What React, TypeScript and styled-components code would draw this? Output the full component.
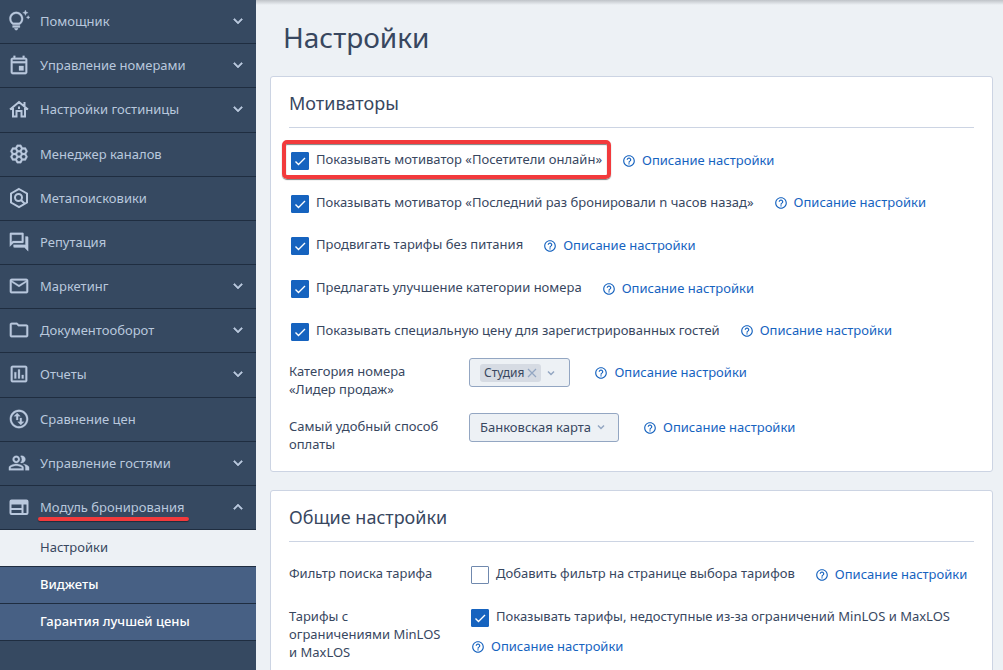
import React, { useState } from "react";
import styled, { createGlobalStyle, css } from "styled-components";
import type { IconType } from "react-icons";
import {
  MdOutlineTipsAndUpdates,
  MdOutlineEvent,
  MdOutlineHive,
  MdOutlineForum,
  MdMailOutline,
  MdOutlineFolder,
  MdOutlineInsertChart,
  MdOutlineSwapVerticalCircle,
  MdOutlinePeopleAlt,
  MdExpandMore,
  MdExpandLess,
  MdHelpOutline,
} from "react-icons/md";

const color = {
  nav: "#364961",
  navLine: "#1f2d40",
  navText: "#b9c8dd",
  subNav: "#476084",
  page: "#edf1f5",
  line: "#ccd4e3",
  text: "#38475f",
  link: "#1663bf",
  control: "#93a6c2",
  mark: "#f23a3c",
};

const GlobalStyle = createGlobalStyle`
  * { box-sizing: border-box; }
  body {
    margin: 0;
    background: ${color.page};
    color: ${color.text};
    font: 13px/18px "Noto Sans", "Open Sans", sans-serif;
  }
  ul { list-style: none; margin: 0; padding: 0; }
  button, select, input { font: inherit; color: inherit; margin: 0; }
`;

const Shell = styled.div`
  display: grid;
  grid-template-columns: 256px minmax(0, 1fr);
  height: 100vh;
`;

const Sidebar = styled.nav`
  background: ${color.nav};
  overflow: hidden;
`;

const Menu = styled.ul`
  display: grid;
  grid-auto-rows: 1fr;
  min-height: 530px;
`;

const MenuItem = styled.li`
  display: flex;
  border-bottom: 1px solid ${color.navLine};
`;

const MenuButton = styled.button`
  flex: 1;
  display: grid;
  grid-template-columns: 22px 1fr 18px;
  column-gap: 10px;
  align-items: center;
  padding: 0 9px 1px 8px;
  border: 0;
  background: none;
  color: ${color.navText};
  text-align: left;
  cursor: pointer;

  > svg:last-child path:not([fill="none"]) {
    stroke-width: 0.8px;
  }
`;

const MenuLabel = styled.span<{ $marked?: boolean }>`
  position: relative;
  justify-self: start;
  ${(p) =>
    p.$marked &&
    css`
      &::after {
        content: "";
        position: absolute;
        left: -2px;
        right: -4px;
        bottom: -5px;
        height: 4px;
        border-radius: 2px;
        background: ${color.mark};
        box-shadow: 0 1px 1px rgba(0, 0, 0, 0.4);
      }
    `}
`;

const MenuIcon = styled.span`
  display: grid;

  svg[stroke-width="0"] path:not([fill="none"]) {
    stroke-width: 0.3px;
  }
`;

const SubLink = styled.a<{ $active?: boolean }>`
  display: block;
  padding: 8px 40px 10px;
  border-bottom: 1px solid ${color.navLine};
  background: ${(p) => (p.$active ? color.page : color.subNav)};
  color: ${(p) => (p.$active ? color.text : "#fff")};
  font-weight: ${(p) => (p.$active ? 400 : 500)};
  text-decoration: none;
`;

const Main = styled.main`
  overflow-y: auto;
  scrollbar-width: none;
  padding: 0 10px 20px 14px;
  background: linear-gradient(#bfc3c8, ${color.page} 5px);
`;

const Title = styled.h1`
  margin: 0;
  padding: 18px 13px 20px;
  font-size: 28px;
  line-height: 38px;
  font-weight: 400;
`;

const Card = styled.section`
  margin-bottom: 18px;
  padding: 0 18px 18px;
  border: 1px solid ${color.line};
  border-radius: 3px;
  background: #fff;
`;

const CardTitle = styled.h2`
  margin: 0;
  padding: 14px 0 12px;
  border-bottom: 1px solid ${color.line};
  font-size: 18px;
  line-height: 24px;
  font-weight: 400;
`;

const OptionList = styled.div`
  display: grid;
  grid-auto-rows: 1fr;
  min-height: 224px;
  padding: 11px 0 0 2px;
`;

const OptionRow = styled.div`
  display: flex;
  align-items: center;
  gap: 20px;
`;

const CheckLabel = styled.label<{ $marked?: boolean }>`
  position: relative;
  display: flex;
  align-items: flex-start;
  gap: 7px;
  ${(p) =>
    p.$marked &&
    css`
      &::after {
        content: "";
        position: absolute;
        inset: -10px -9px -9px;
        border: 4px solid ${color.mark};
        border-radius: 5px;
        box-shadow: 0 1px 1px rgba(0, 0, 0, 0.5), inset 0 1px 1px rgba(0, 0, 0, 0.5);
        pointer-events: none;
      }
    `}
`;

const CheckBox = styled.span`
  position: relative;
  display: grid;
  margin-top: 2px;

  input {
    appearance: none;
    width: 18px;
    height: 18px;
    border: 1px solid #7089ae;
    border-radius: 1px;
    background: #fff;
  }
  input:checked {
    border-color: ${color.link};
    background: ${color.link};
  }
  svg {
    position: absolute;
    inset: 0;
    pointer-events: none;
  }
`;

const HelpAnchor = styled.a`
  display: inline-flex;
  align-items: center;
  gap: 6px;
  padding-bottom: 1px;
  color: ${color.link};
  text-decoration: none;
  white-space: nowrap;

  svg {
    margin-top: 2px;
  }
`;

const FieldList = styled.div<{ $wide?: boolean }>`
  display: grid;
  row-gap: ${(p) => (p.$wide ? 23 : 15)}px;
  padding-top: ${(p) => (p.$wide ? 22 : 6)}px;
`;

const Field = styled.div`
  display: grid;
  grid-template-columns: 156px minmax(0, 1fr);
  column-gap: 24px;
  align-items: start;
`;

const FieldLabel = styled.label<{ $beside?: boolean }>`
  padding-top: ${(p) => (p.$beside ? 4 : 0)}px;
`;

const FieldBody = styled.div<{ $indent?: boolean }>`
  display: flex;
  flex-wrap: wrap;
  align-items: center;
  gap: 10px ${(p) => (p.$indent ? 20 : 24)}px;
  padding-left: ${(p) => (p.$indent ? 2 : 0)}px;
`;

const controlBox = css`
  height: 29px;
  border: 1px solid ${color.control};
  border-radius: 3px;
  background: ${color.page};
`;

const ChipBox = styled.div`
  ${controlBox}
  display: flex;
  align-items: center;
  gap: 3px;
  padding: 0 11px 0 10px;
`;

const Chip = styled.span`
  display: flex;
  align-items: center;
  gap: 3px;
  height: 18px;
  padding: 0 4px;
  border-radius: 3px;
  background: #d6dbe3;
  font-size: 12px;
`;

const IconButton = styled.button`
  display: grid;
  padding: 0;
  border: 0;
  background: none;
  color: ${color.control};
  cursor: pointer;
`;

const SelectWrap = styled.div`
  position: relative;
  display: flex;
  color: ${color.control};

  select {
    ${controlBox}
    appearance: none;
    padding: 0 27px 2px 10px;
    color: ${color.text};
  }
  svg {
    position: absolute;
    right: 11px;
    top: 7px;
    pointer-events: none;
  }
`;

const HomeIcon = () => (
  <svg width="22" height="22" viewBox="0 0 22 22" fill="none" stroke="currentColor" strokeWidth="2">
    <path d="M2 11.500 11 4l9 7.500M16.500 8.500V4M5 10v8.500h3.500V13h5v5.500H17V10" />
    <path d="M11 8.500v2.500" />
  </svg>
);

const HexSearchIcon = () => (
  <svg width="22" height="22" viewBox="0 0 22 22" fill="none" stroke="currentColor" strokeWidth="2">
    <path d="M11 2 19 6.500v9L11 20l-8-4.500v-9z" />
    <circle cx="10.500" cy="10.500" r="3.500" />
    <path d="m13 13 3.500 3.500" />
  </svg>
);

const LayoutIcon = () => (
  <svg width="22" height="22" viewBox="0 0 22 22" fill="none" stroke="currentColor" strokeWidth="2">
    <rect x="2.500" y="4.500" width="17" height="13.500" rx="1" />
    <path d="M2.500 6.500h17" strokeWidth="4" />
    <path d="M3 13h11M14.500 8v10" />
  </svg>
);

const ChevronIcon = () => (
  <svg width="14" height="14" viewBox="0 0 14 14" fill="none" stroke="currentColor" strokeWidth="1.500">
    <path d="m4 5.500 3 3 3-3" />
  </svg>
);

const CrossIcon = () => (
  <svg width="10" height="10" viewBox="0 0 10 10" fill="none" stroke="currentColor" strokeWidth="1.200">
    <path d="m1 1 8 8M9 1 1 9" />
  </svg>
);

const TickIcon = () => (
  <svg width="18" height="18" viewBox="0 0 18 18" fill="none" stroke="#fff" strokeWidth="1.400">
    <path d="m4.500 9.500 3 3 6.500-6.500" />
  </svg>
);

type Icon = IconType | (() => React.JSX.Element);

const menu: { label: string; icon: Icon; more?: boolean; open?: boolean }[] = [
  { label: "Помощник", icon: MdOutlineTipsAndUpdates, more: true },
  { label: "Управление номерами", icon: MdOutlineEvent, more: true },
  { label: "Настройки гостиницы", icon: HomeIcon, more: true },
  { label: "Менеджер каналов", icon: MdOutlineHive },
  { label: "Метапоисковики", icon: HexSearchIcon },
  { label: "Репутация", icon: MdOutlineForum },
  { label: "Маркетинг", icon: MdMailOutline, more: true },
  { label: "Документооборот", icon: MdOutlineFolder, more: true },
  { label: "Отчеты", icon: MdOutlineInsertChart, more: true },
  { label: "Сравнение цен", icon: MdOutlineSwapVerticalCircle },
  { label: "Управление гостями", icon: MdOutlinePeopleAlt, more: true },
  { label: "Модуль бронирования", icon: LayoutIcon, more: true, open: true },
];

const subMenu = ["Настройки", "Виджеты", "Гарантия лучшей цены"];

const motivators = [
  "Показывать мотиватор «Посетители онлайн»",
  "Показывать мотиватор «Последний раз бронировали n часов назад»",
  "Продвигать тарифы без питания",
  "Предлагать улучшение категории номера",
  "Показывать специальную цену для зарегистрированных гостей",
];

const HelpLink = () => (
  <HelpAnchor href="#help">
    <MdHelpOutline size={14} />
    Описание настройки
  </HelpAnchor>
);

function Check({ label, initial = true, marked }: { label: string; initial?: boolean; marked?: boolean }) {
  const [on, setOn] = useState(initial);
  return (
    <CheckLabel $marked={marked}>
      <CheckBox>
        <input type="checkbox" checked={on} onChange={() => setOn(!on)} />
        {on && <TickIcon />}
      </CheckBox>
      {label}
    </CheckLabel>
  );
}

export default function App() {
  return (
    <>
      <GlobalStyle />
      <Shell>
        <Sidebar>
          <Menu>
            {menu.map(({ label, icon: ItemIcon, more, open }) => (
              <MenuItem key={label}>
                <MenuButton type="button" aria-expanded={more ? !!open : undefined}>
                  <MenuIcon>
                    <ItemIcon size={22} />
                  </MenuIcon>
                  <MenuLabel $marked={open}>{label}</MenuLabel>
                  {more && (open ? <MdExpandLess size={18} /> : <MdExpandMore size={18} />)}
                </MenuButton>
              </MenuItem>
            ))}
          </Menu>
          <ul>
            {subMenu.map((label, i) => (
              <li key={label}>
                <SubLink href="#section" $active={i === 0}>
                  {label}
                </SubLink>
              </li>
            ))}
          </ul>
        </Sidebar>
        <Main>
          <Title>Настройки</Title>
          <Card>
            <CardTitle>Мотиваторы</CardTitle>
            <OptionList>
              {motivators.map((label, i) => (
                <OptionRow key={label}>
                  <Check label={label} marked={i === 0} />
                  <HelpLink />
                </OptionRow>
              ))}
            </OptionList>
            <FieldList>
              <Field>
                <FieldLabel as="span" $beside>
                  Категория номера «Лидер продаж»
                </FieldLabel>
                <FieldBody>
                  <ChipBox>
                    <Chip>
                      Студия
                      <IconButton type="button" aria-label="Удалить">
                        <CrossIcon />
                      </IconButton>
                    </Chip>
                    <IconButton type="button" aria-label="Открыть список">
                      <ChevronIcon />
                    </IconButton>
                  </ChipBox>
                  <HelpLink />
                </FieldBody>
              </Field>
              <Field>
                <FieldLabel htmlFor="payment" $beside>
                  Самый удобный способ оплаты
                </FieldLabel>
                <FieldBody>
                  <SelectWrap>
                    <select id="payment">
                      <option>Банковская карта</option>
                    </select>
                    <ChevronIcon />
                  </SelectWrap>
                  <HelpLink />
                </FieldBody>
              </Field>
            </FieldList>
          </Card>
          <Card>
            <CardTitle>Общие настройки</CardTitle>
            <FieldList $wide>
              <Field>
                <FieldLabel as="span">Фильтр поиска тарифа</FieldLabel>
                <FieldBody $indent>
                  <Check label="Добавить фильтр на странице выбора тарифов" initial={false} />
                  <HelpLink />
                </FieldBody>
              </Field>
              <Field>
                <FieldLabel as="span">Тарифы с ограничениями MinLOS и MaxLOS</FieldLabel>
                <FieldBody $indent>
                  <Check label="Показывать тарифы, недоступные из-за ограничений MinLOS и MaxLOS" />
                  <HelpLink />
                </FieldBody>
              </Field>
            </FieldList>
          </Card>
        </Main>
      </Shell>
    </>
  );
}
